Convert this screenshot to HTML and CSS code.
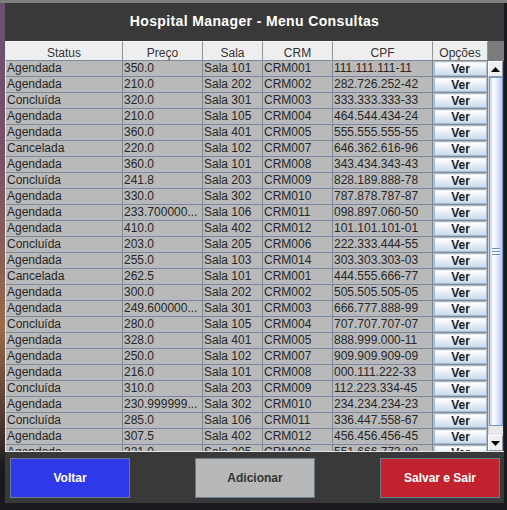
FILE: index.html
```html
<!DOCTYPE html>
<html lang="pt">
<head>
<meta charset="utf-8">
<title>Hospital Manager - Menu Consultas</title>
<link rel="stylesheet" href="styles.css">
</head>
<body>
<div class="window">
  <div class="title">Hospital Manager - Menu Consultas</div>
  <div class="pane">
    <div class="table">
      <div class="row head">
        <div class="hc">Status</div><div class="hc">Preço</div><div class="hc">Sala</div><div class="hc">CRM</div><div class="hc">CPF</div><div class="hc">Opções</div>
      </div>
      <div class="body">
        <div class="row"><div class="c">Agendada</div><div class="c">350.0</div><div class="c">Sala 101</div><div class="c">CRM001</div><div class="c">111.111.111-11</div><div class="c opt"><span class="ver">Ver</span></div></div>
        <div class="row"><div class="c">Agendada</div><div class="c">210.0</div><div class="c">Sala 202</div><div class="c">CRM002</div><div class="c">282.726.252-42</div><div class="c opt"><span class="ver">Ver</span></div></div>
        <div class="row"><div class="c">Concluída</div><div class="c">320.0</div><div class="c">Sala 301</div><div class="c">CRM003</div><div class="c">333.333.333-33</div><div class="c opt"><span class="ver">Ver</span></div></div>
        <div class="row"><div class="c">Agendada</div><div class="c">210.0</div><div class="c">Sala 105</div><div class="c">CRM004</div><div class="c">464.544.434-24</div><div class="c opt"><span class="ver">Ver</span></div></div>
        <div class="row"><div class="c">Agendada</div><div class="c">360.0</div><div class="c">Sala 401</div><div class="c">CRM005</div><div class="c">555.555.555-55</div><div class="c opt"><span class="ver">Ver</span></div></div>
        <div class="row"><div class="c">Cancelada</div><div class="c">220.0</div><div class="c">Sala 102</div><div class="c">CRM007</div><div class="c">646.362.616-96</div><div class="c opt"><span class="ver">Ver</span></div></div>
        <div class="row"><div class="c">Agendada</div><div class="c">360.0</div><div class="c">Sala 101</div><div class="c">CRM008</div><div class="c">343.434.343-43</div><div class="c opt"><span class="ver">Ver</span></div></div>
        <div class="row"><div class="c">Concluída</div><div class="c">241.8</div><div class="c">Sala 203</div><div class="c">CRM009</div><div class="c">828.189.888-78</div><div class="c opt"><span class="ver">Ver</span></div></div>
        <div class="row"><div class="c">Agendada</div><div class="c">330.0</div><div class="c">Sala 302</div><div class="c">CRM010</div><div class="c">787.878.787-87</div><div class="c opt"><span class="ver">Ver</span></div></div>
        <div class="row"><div class="c">Agendada</div><div class="c">233.700000...</div><div class="c">Sala 106</div><div class="c">CRM011</div><div class="c">098.897.060-50</div><div class="c opt"><span class="ver">Ver</span></div></div>
        <div class="row"><div class="c">Agendada</div><div class="c">410.0</div><div class="c">Sala 402</div><div class="c">CRM012</div><div class="c">101.101.101-01</div><div class="c opt"><span class="ver">Ver</span></div></div>
        <div class="row"><div class="c">Concluída</div><div class="c">203.0</div><div class="c">Sala 205</div><div class="c">CRM006</div><div class="c">222.333.444-55</div><div class="c opt"><span class="ver">Ver</span></div></div>
        <div class="row"><div class="c">Agendada</div><div class="c">255.0</div><div class="c">Sala 103</div><div class="c">CRM014</div><div class="c">303.303.303-03</div><div class="c opt"><span class="ver">Ver</span></div></div>
        <div class="row"><div class="c">Cancelada</div><div class="c">262.5</div><div class="c">Sala 101</div><div class="c">CRM001</div><div class="c">444.555.666-77</div><div class="c opt"><span class="ver">Ver</span></div></div>
        <div class="row"><div class="c">Agendada</div><div class="c">300.0</div><div class="c">Sala 202</div><div class="c">CRM002</div><div class="c">505.505.505-05</div><div class="c opt"><span class="ver">Ver</span></div></div>
        <div class="row"><div class="c">Agendada</div><div class="c">249.600000...</div><div class="c">Sala 301</div><div class="c">CRM003</div><div class="c">666.777.888-99</div><div class="c opt"><span class="ver">Ver</span></div></div>
        <div class="row"><div class="c">Concluída</div><div class="c">280.0</div><div class="c">Sala 105</div><div class="c">CRM004</div><div class="c">707.707.707-07</div><div class="c opt"><span class="ver">Ver</span></div></div>
        <div class="row"><div class="c">Agendada</div><div class="c">328.0</div><div class="c">Sala 401</div><div class="c">CRM005</div><div class="c">888.999.000-11</div><div class="c opt"><span class="ver">Ver</span></div></div>
        <div class="row"><div class="c">Agendada</div><div class="c">250.0</div><div class="c">Sala 102</div><div class="c">CRM007</div><div class="c">909.909.909-09</div><div class="c opt"><span class="ver">Ver</span></div></div>
        <div class="row"><div class="c">Agendada</div><div class="c">216.0</div><div class="c">Sala 101</div><div class="c">CRM008</div><div class="c">000.111.222-33</div><div class="c opt"><span class="ver">Ver</span></div></div>
        <div class="row"><div class="c">Concluída</div><div class="c">310.0</div><div class="c">Sala 203</div><div class="c">CRM009</div><div class="c">112.223.334-45</div><div class="c opt"><span class="ver">Ver</span></div></div>
        <div class="row"><div class="c">Agendada</div><div class="c">230.999999...</div><div class="c">Sala 302</div><div class="c">CRM010</div><div class="c">234.234.234-23</div><div class="c opt"><span class="ver">Ver</span></div></div>
        <div class="row"><div class="c">Concluída</div><div class="c">285.0</div><div class="c">Sala 106</div><div class="c">CRM011</div><div class="c">336.447.558-67</div><div class="c opt"><span class="ver">Ver</span></div></div>
        <div class="row"><div class="c">Agendada</div><div class="c">307.5</div><div class="c">Sala 402</div><div class="c">CRM012</div><div class="c">456.456.456-45</div><div class="c opt"><span class="ver">Ver</span></div></div>
        <div class="row"><div class="c">Agendada</div><div class="c">321.0</div><div class="c">Sala 205</div><div class="c">CRM006</div><div class="c">551.666.773-88</div><div class="c opt"><span class="ver">Ver</span></div></div>
      </div>
    </div>
    <div class="sbcol">
      <div class="corner"></div>
      <div class="scrollbar">
        <div class="arrow"><svg width="9" height="5" viewBox="0 0 9 5"><polygon points="0,5 9,5 4.5,0" fill="#000"/></svg></div>
        <div class="track">
          <div class="thumb"><span class="grip"></span></div>
        </div>
        <div class="arrow"><svg width="9" height="5" viewBox="0 0 9 5"><polygon points="0,0 9,0 4.5,5" fill="#000"/></svg></div>
      </div>
    </div>
  </div>
  <div class="actions">
    <button class="btn blue">Voltar</button>
    <button class="btn grey">Adicionar</button>
    <button class="btn red">Salvar e Sair</button>
  </div>
</div>
</body>
</html>
```
FILE: styles.css
```css
html {
  background: #1a1a1e;
}
body {
  margin: 0;
  padding: 3px 0 0 5px;
  font-family: "Liberation Sans", Arial, sans-serif;
  background:
    linear-gradient(#7e7e7e, #7e7e7e) top left / 100% 3px no-repeat,
    linear-gradient(#6a4f74, #7a5068 30%, #9a6a48 65%, #3a2a2a 88%, #1a1a1e 92%) top left / 5px 100% no-repeat;
  min-height: 507px;
  box-sizing: border-box;
}
.window {
  width: 499px;
  height: 500px;
  background: #393939;
  display: flex;
  flex-direction: column;
}
.title {
  height: 38px;
  box-sizing: border-box;
  padding-top: 10px;
  text-align: center;
  color: #ffffff;
  font-weight: bold;
  font-size: 14px;
  letter-spacing: 0.37px;
  line-height: normal;
}
.pane {
  display: flex;
  height: 411px;
  box-sizing: border-box;
  border-left: 1px solid #e6e6e6;
  border-bottom: 1px solid #e6e6e6;
}
.table {
  width: 482px;
  display: flex;
  flex-direction: column;
}
.row {
  display: grid;
  grid-template-columns: 117px 80px 60px 70px 100px 55px;
}
.hc {
  height: 20px;
  box-sizing: border-box;
  padding-top: 3px;
  line-height: 16px;
  font-size: 12px;
  color: #333333;
  text-align: center;
  background: #eeeeee;
  border-top: 1px solid #f6f6f6;
  border-right: 1px solid #8c949c;
  border-bottom: 1px solid #7b8a9b;
  overflow: hidden;
  white-space: nowrap;
}
.body {
  height: 390px;
  overflow: hidden;
}
.c {
  height: 16px;
  box-sizing: border-box;
  background: #b9b9b9;
  border-right: 1px solid #7b8a9b;
  border-bottom: 1px solid #7b8a9b;
  font-size: 12px;
  line-height: 15px;
  color: #262626;
  padding-left: 1px;
  white-space: nowrap;
  overflow: hidden;
}
.c.opt {
  padding: 1px 0 0 1px;
}
.ver {
  display: block;
  width: 53px;
  height: 14px;
  box-sizing: border-box;
  border: 1px solid #a9bcd0;
  border-top-color: #e4ecf5;
  background: linear-gradient(#ffffff, #e8eff8 45%, #c9d9ec);
  text-align: center;
  font-weight: bold;
  font-size: 12px;
  line-height: 12px;
  color: #1e1e1e;
}
.sbcol {
  width: 16px;
  display: flex;
  flex-direction: column;
}
.corner {
  height: 20px;
  background: #7b7b7b;
}
.scrollbar {
  height: 390px;
  display: flex;
  flex-direction: column;
  background: #eeeeee;
  border-right: 1px solid #2e2e2e;
  box-sizing: border-box;
}
.arrow {
  height: 16px;
  box-sizing: border-box;
  background: #eeeeee;
  border: 1px solid #8a99aa;
  border-top-color: #ffffff;
  border-left-color: #ffffff;
  display: flex;
  align-items: center;
  justify-content: center;
}
.track {
  flex: 1;
  background: #e8e8e8;
  border-left: 1px solid #d0d0d0;
}
.thumb {
  height: 349px;
  box-sizing: border-box;
  border: 1px solid #7595cf;
  background: linear-gradient(to right, #c2d5ee, #ffffff 30%, #e6eef8 55%, #b9cde7);
  display: flex;
  align-items: center;
  justify-content: center;
}
.grip {
  display: block;
  width: 8px;
  height: 7px;
  background: repeating-linear-gradient(#6f8bc4 0 1px, #ffffff 1px 2px, transparent 2px 3px);
}
.actions {
  flex: 1;
  display: flex;
  justify-content: space-between;
  align-items: flex-start;
  padding: 6px 4px 0 5px;
}
.btn {
  width: 120px;
  height: 40px;
  border: 1px solid #6b7b8c;
  font-family: "Liberation Sans", Arial, sans-serif;
  font-weight: bold;
  font-size: 12px;
  padding: 0;
  margin: 0;
}
.blue {
  background: #2e3ae9;
  color: #ffffff;
}
.grey {
  background: #b8b8b8;
  color: #333333;
}
.red {
  background: #c2222e;
  color: #ffffff;
}
```
